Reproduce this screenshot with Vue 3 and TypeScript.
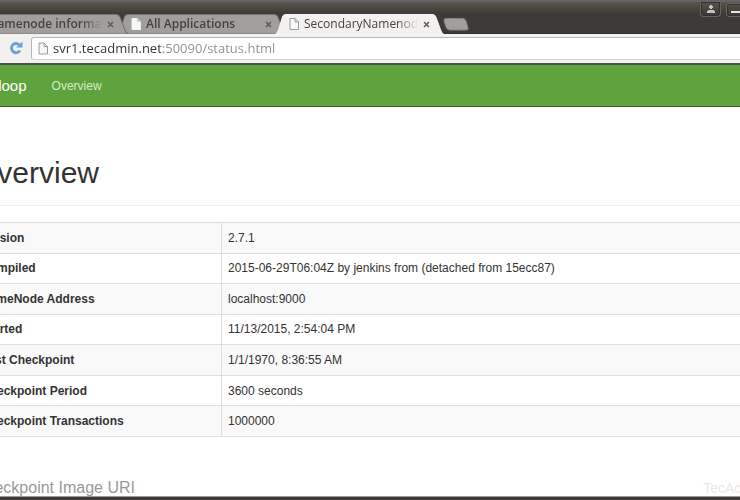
<script setup lang="ts">
import { ref } from 'vue'

interface Tab {
  title: string
}

interface Row {
  label: string
  value: string
}

const tabs: Tab[] = [
  { title: 'Namenode information' },
  { title: 'All Applications' },
  { title: 'SecondaryNamenode information' },
]
const activeTab = ref(2)
const address = ref('svr1.tecadmin.net:50090/status.html')

const rows: Row[] = [
  { label: 'Version', value: '2.7.1' },
  { label: 'Compiled', value: '2015-06-29T06:04Z by jenkins from (detached from 15ecc87)' },
  { label: 'NameNode Address', value: 'localhost:9000' },
  { label: 'Started', value: '11/13/2015, 2:54:04 PM' },
  { label: 'Last Checkpoint', value: '1/1/1970, 8:36:55 AM' },
  { label: 'Checkpoint Period', value: '3600 seconds' },
  { label: 'Checkpoint Transactions', value: '1000000' },
]
</script>

<template>
  <div class="window">
    <header class="frame">
      <div class="tabs" role="tablist">
        <div v-for="(tab, i) in tabs" :key="tab.title" class="tab" :class="{ active: i === activeTab }" :style="{ zIndex: i === activeTab ? 9 : 5 - i }">
          <svg class="shape" viewBox="0 0 168 20" preserveAspectRatio="none" aria-hidden="true">
            <path d="M0 20 C2 19 3 17 4 14 L7 4 Q8 .5 11 .5 L155 .5 Q158 .5 159 3 L164 16 Q165 19.500 168 20 Z" />
          </svg>
          <svg class="page-icon" viewBox="0 0 10 12" aria-hidden="true">
            <path d="M1 .5 H6 L9.500 4 V11.500 H1 Z M6 .5 V4 H9.500" />
          </svg>
          <button class="title" role="tab" :aria-selected="i === activeTab" @click="activeTab = i">{{ tab.title }}</button>
          <button class="close" :aria-label="'Close ' + tab.title">
            <svg viewBox="0 0 7 7"><path d="M1 1 L6 6 M6 1 L1 6" /></svg>
          </button>
        </div>
        <button class="new-tab" aria-label="New tab">
          <svg viewBox="0 0 26 13"><path d="M3 .5 H20 Q22 .5 23 3 L25 10 Q25.500 12 23 12 H7 Q4 12 3 9 L1 3 Q.5 .5 3 .5Z" /></svg>
        </button>
      </div>
      <div class="controls">
        <button class="profile" aria-label="Profile">
          <svg viewBox="0 0 8 8"><path d="M3 0H5V1H6V3H5V4H3V3H2V1H3Z M1 5H7V6H8V8H0V6H1Z" /></svg>
        </button>
        <button class="minimize" aria-label="Minimize"><span></span></button>
      </div>
    </header>

    <div class="toolbar">
      <button class="reload" aria-label="Reload">
        <svg viewBox="0 0 14 14">
          <path class="arc" d="M10.300 3.800 A4.600 4.600 0 1 0 11 9.500" />
          <path class="head" d="M7 6.500 L13.500 .5 V6.500 Z" />
        </svg>
      </button>
      <label class="omnibox">
        <svg class="page-icon" viewBox="0 0 10 12" aria-hidden="true">
          <path d="M1 .5 H6 L9.500 4 V11.500 H1 Z M6 .5 V4 H9.500" />
        </svg>
        <input v-model="address" type="text" aria-label="Address" spellcheck="false" />
      </label>
    </div>

    <main class="page">
      <nav class="navbar">
        <a class="brand" href="#">Hadoop</a>
        <a class="link" href="#">Overview</a>
      </nav>
      <div class="content">
        <h1>Overview</h1>
        <table>
          <tbody>
            <tr v-for="row in rows" :key="row.label">
              <th scope="row">{{ row.label }}</th>
              <td>{{ row.value }}</td>
            </tr>
          </tbody>
        </table>
        <h2>Checkpoint Image URI</h2>
      </div>
      <span class="watermark">TecAdmin.net</span>
    </main>
  </div>
</template>

<style>
body {
  margin: 0;
  background: #fff;
}
</style>

<style scoped>
* {
  box-sizing: border-box;
}

button {
  padding: 0;
  border: 0;
  background: none;
  font: inherit;
  color: inherit;
}

svg {
  display: block;
}

.window {
  height: 100vh;
  display: flex;
  flex-direction: column;
  overflow: hidden;
  border-bottom: 3px solid #3c3b37;
  font-family: "Liberation Sans", Arial, sans-serif;
  color: #333;
}

.frame {
  flex: none;
  height: 34px;
  display: flex;
  justify-content: space-between;
  border-top: 2px solid #64636a;
  border-bottom: 1px solid #35322f;
  background: linear-gradient(#57554c, #3c3b37 12px);
}

.tabs {
  display: flex;
  margin-left: -41px;
  padding-top: 12px;
}

.tab {
  position: relative;
  flex: none;
  width: 170px;
  height: 20px;
  margin-right: -12px;
  padding: 0 15px 0 14px;
  display: flex;
  align-items: center;
  gap: 5px;
  font: 600 12px/20px "Open Sans", "Noto Sans", sans-serif;
  color: #45433e;
}

.shape {
  position: absolute;
  inset: 0;
  width: 100%;
  height: 100%;
  fill: #a09f9c;
  stroke: #777570;
}

.active .shape {
  height: 21px;
  fill: #f2f1f0;
  stroke: #f7f6f5;
}

.tab.active {
  font-weight: 500;
}

.page-icon {
  position: relative;
  flex: none;
  width: 10px;
  height: 12px;
  fill: #f8f8f8;
  stroke: #9a9a9a;
}

.tab:not(.active) .page-icon {
  stroke: #f0f0f0;
}

.title {
  position: relative;
  flex: 1;
  min-width: 0;
  overflow: hidden;
  white-space: nowrap;
  text-align: left;
  mask-image: linear-gradient(to right, #000 82%, transparent);
}

.close {
  position: relative;
  flex: none;
}

.close svg {
  width: 7px;
  height: 7px;
  fill: none;
  stroke: #5c5a56;
  stroke-width: 1.5;
}

.new-tab {
  margin: 4px 0 0 10px;
  align-self: flex-start;
}

.new-tab svg {
  width: 26px;
  height: 13px;
  fill: #a09f9c;
  stroke: #85837f;
}

.controls {
  display: flex;
  gap: 5px;
  margin-right: -6px;
}

.profile {
  width: 21px;
  height: 15px;
  display: grid;
  place-items: center;
  border: 1px solid #66645c;
  border-top: 0;
  border-radius: 0 0 4px 4px;
  box-shadow: inset 0 0 0 1px #33322e;
}

.profile svg {
  width: 8px;
  height: 8px;
  fill: #c5c4c0;
}

.minimize {
  width: 20px;
  height: 14px;
  margin-top: 1px;
  display: grid;
  place-items: center;
  border: 1px solid #66645c;
  border-radius: 3px;
  box-shadow: inset 0 0 0 1px #33322e;
}

.minimize span {
  width: 10px;
  height: 2px;
  margin-top: 4px;
  background: #e5e4e0;
}

.toolbar {
  flex: none;
  height: 31px;
  display: flex;
  align-items: flex-start;
  gap: 8px;
  padding: 3px 0 0 9px;
  border-bottom: 2px solid #4a5346;
  background: #f2f1f0;
}

.reload {
  margin-top: 4px;
}

.reload svg {
  width: 14px;
  height: 14px;
}

.arc {
  fill: none;
  stroke: #6d9fd6;
  stroke-width: 3;
}

.head {
  fill: #6d9fd6;
}

.omnibox {
  flex: 1;
  height: 23px;
  display: flex;
  align-items: center;
  gap: 5px;
  margin-right: -4px;
  padding-left: 6px;
  border: 1px solid #b8b6b4;
  border-bottom-color: #d5d3d1;
  border-radius: 3px;
  background: #fff;
}

.omnibox .page-icon {
  width: 10px;
  height: 13px;
}

.omnibox input {
  flex: 1;
  min-width: 0;
  padding: 0 0 2px;
  border: 0;
  outline: 0;
  font: 13px/20px "Open Sans", "Noto Sans", sans-serif;
  color: transparent;
  background: linear-gradient(to right, #303030 108px, #8e8e8e 108px);
  background-clip: text;
}

.page {
  position: relative;
  flex: 1;
  min-height: 0;
  overflow: hidden;
  border-bottom: 1px solid #9a9998;
}

.navbar {
  height: 42px;
  display: flex;
  align-items: center;
  gap: 25px;
  margin-left: -26px;
  border-bottom: 1px solid #3e5a2e;
  background: #5fa33e;
}

.navbar a {
  color: #d5ecc8;
  font-size: 12px;
  line-height: 16px;
  text-decoration: none;
}

.navbar .brand {
  color: #fff;
  font-size: 15px;
}

.content {
  margin-left: -26px;
}

h1 {
  margin: 49px 0 16px;
  padding-bottom: 15px;
  border-bottom: 1px solid #eee;
  font-size: 30px;
  font-weight: 400;
  line-height: 34px;
}

table {
  width: calc(100% + 20px);
  height: 215px;
  border-collapse: collapse;
  border: 1px solid #ddd;
  font-size: 12px;
  line-height: 16px;
  text-align: left;
}

th,
td {
  padding: 6px;
  border: 1px solid #ddd;
}

th {
  width: 247px;
}

tr:nth-child(odd) {
  background: #f9f9f9;
}

h2 {
  margin: 41px 0 0;
  font-size: 16px;
  font-weight: 400;
  line-height: 20px;
  color: #999;
}

.watermark {
  position: absolute;
  right: -48px;
  bottom: 0;
  font-size: 14px;
  line-height: 16px;
  color: #e9e9e9;
}
</style>
